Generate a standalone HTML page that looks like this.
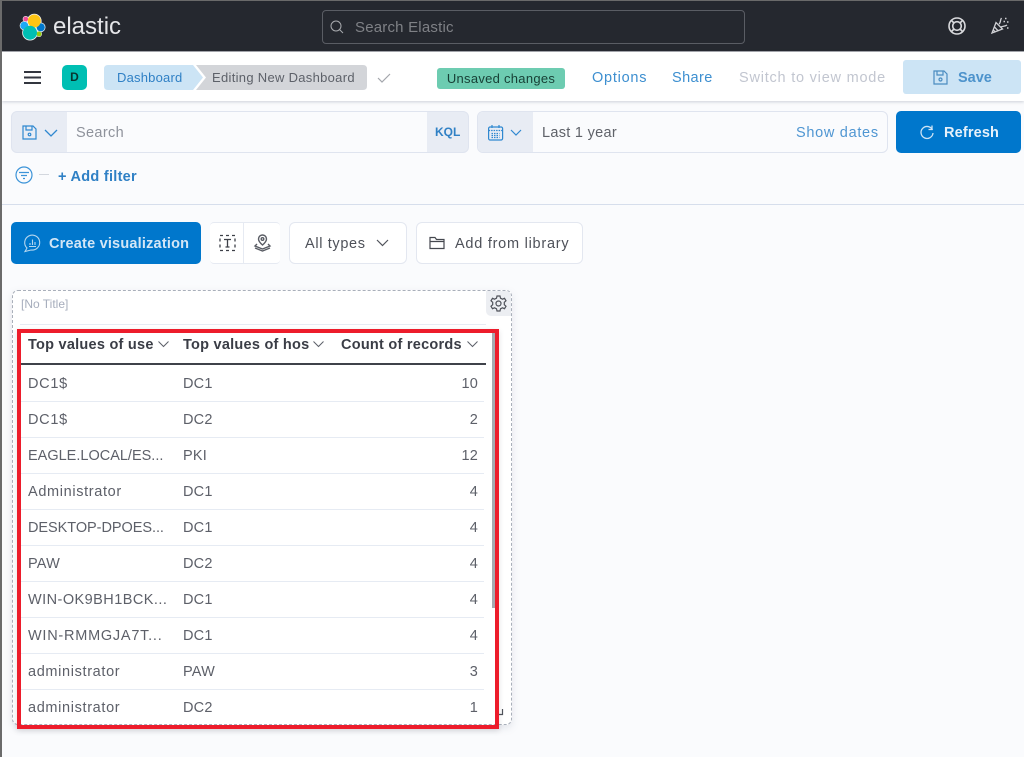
<!DOCTYPE html>
<html><head><meta charset="utf-8"><style>
html,body{margin:0;padding:0}
body{width:1024px;height:757px;position:relative;overflow:hidden;background:#fafbfd;font-family:"Liberation Sans",sans-serif;font-size:14px;color:#343741}
.a{position:absolute;box-sizing:border-box}
.t{position:absolute;white-space:nowrap;line-height:20px}
.cell{position:absolute;white-space:nowrap;font-size:14.5px;line-height:20px;color:#5d6069;letter-spacing:.2px}
.hl{position:absolute;left:21px;width:463px;height:1px;background:#e6ebf3}
svg{position:absolute;overflow:visible;fill:none}
.h{position:absolute;white-space:nowrap;font-weight:bold;font-size:14.5px;line-height:20px;color:#3a3d46;letter-spacing:.25px}
</style></head><body>
<div class="a" style="left:0;top:0;width:1024px;height:52px;background:#25282f;border-top:1px solid #6a6a6a;border-bottom:1px solid #a6a8ad"></div>
<svg style="left:19px;top:13px" width="28" height="28" viewBox="0 0 28 28">
<g fill="#f2f4f4"><circle cx="15.300" cy="8" r="7.300"/><circle cx="11" cy="19.700" r="7.800"/><circle cx="21.700" cy="14.300" r="4.800"/><circle cx="5.300" cy="12.700" r="4.600"/><circle cx="6.700" cy="6" r="3"/><circle cx="20" cy="21" r="3"/></g>
<circle cx="6.700" cy="6" r="2.400" fill="#f04e98"/><circle cx="5.300" cy="12.700" r="4" fill="#1ba9f5"/><circle cx="21.700" cy="14.300" r="4.100" fill="#0077cc"/><circle cx="20" cy="21" r="2.500" fill="#93c90e"/><circle cx="15.300" cy="8" r="6.500" fill="#fec514"/><circle cx="11" cy="19.700" r="7" fill="#00bfb3"/></svg>
<div class="t" style="left:53px;top:13px;font-size:24px;line-height:28px;color:#e4e5e8">elastic</div>
<div class="a" style="left:322px;top:10px;width:423px;height:34px;border:1px solid #5a5d64;border-radius:4px;background:#25282f"></div>
<svg style="left:330px;top:20px" width="14" height="14" stroke="#a9abaf" stroke-width="1"><circle cx="6" cy="6" r="5"/><path d="M9.500 9.500L13 13"/></svg>
<div class="t" style="left:355px;top:17px;font-size:15px;color:#7f8186;letter-spacing:.2px;margin-top:1px">Search Elastic</div>
<svg style="left:948px;top:17px" width="18" height="18" stroke="#d9dadd" stroke-width="1.600"><circle cx="9" cy="9" r="8"/><circle cx="9" cy="9" r="4.300"/><path d="M3.500 3.500L6 6M14.500 3.500L12 6M3.500 14.500L6 12M14.500 14.500L12 12"/></svg>
<svg style="left:991px;top:17px" width="18" height="18" stroke="#cfd0d4" stroke-width="1.300"><path d="M1 16L5 5.500L11.500 12ZM3.500 10L7.500 14.200M2.300 13L4.700 15.200M8 7C10 5.500 9 3 10.500 1M10 10C12 9 14 9.500 16 8"/><path d="M14 1.500h1.500M16 5h1.500M12.500 4.500h1.500M16 11h1.500" stroke-width="1.500"/></svg>

<div class="a" style="left:2px;top:52px;width:1022px;height:49px;background:#fff;box-shadow:0 1px 3px rgba(100,110,130,.3)"></div>
<svg style="left:24px;top:71px" width="18" height="14" stroke="#33363f" stroke-width="2"><path d="M0 1H17M0 6.500H17M0 12H17"/></svg>
<div class="a" style="left:62px;top:65px;width:25px;height:25px;border-radius:5px;background:#00bfb3;color:#07362f;font-size:12px;font-weight:bold;line-height:25px;text-align:center">D</div>
<svg style="left:104px;top:65px" width="264" height="25"><path d="M4 0H89L99 12.500L89 25H4Q0 25 0 21V4Q0 0 4 0Z" fill="#cce4f5"/><path d="M92 0H259Q263 0 263 4V21Q263 25 259 25H92L102 12.500Z" fill="#d3d5d9"/></svg>
<div class="t" style="left:117px;top:68px;font-size:13px;color:#2f80c5;letter-spacing:.2px">Dashboard</div>
<div class="t" style="left:212px;top:68px;font-size:13px;color:#5d6169;letter-spacing:.3px">Editing New Dashboard</div>
<svg style="left:378px;top:73px" width="13" height="10" stroke="#a3a6ac" stroke-width="1.200"><path d="M0 5L4 9L12 1"/></svg>
<div class="a" style="left:437px;top:68px;width:128px;height:21px;background:#6dccb1;border-radius:3px;font-size:13px;line-height:21px;text-align:center;color:#173f35;letter-spacing:.28px">Unsaved changes</div>
<div class="t" style="left:592px;top:68px;font-size:14.500px;color:#3d8fd0;letter-spacing:.75px">Options</div>
<div class="t" style="left:672px;top:68px;font-size:14.500px;color:#3d8fd0;letter-spacing:.4px">Share</div>
<div class="t" style="left:739px;top:68px;font-size:14.500px;color:#c2c6d0;letter-spacing:.78px">Switch to view mode</div>
<div class="a" style="left:903px;top:60px;width:118px;height:34px;background:#cce4f5;border-radius:3px"></div>
<svg style="left:933px;top:70px" width="15" height="15" stroke="#4a8cc0" stroke-width="1.200"><path d="M1 1H11L14 4V14H1ZM4 1V5H10V1"/><circle cx="7.500" cy="9.500" r="1.500"/></svg>
<div class="t" style="left:958px;top:68px;font-size:14.500px;font-weight:bold;color:#4d93cc">Save</div>

<div class="a" style="left:11px;top:111px;width:458px;height:42px;background:#e8ecf4;border:1px solid #dfe4ef;border-radius:6px"></div>
<div class="a" style="left:67px;top:112px;width:360px;height:40px;background:#fafbfd"></div>
<svg style="left:22px;top:125px" width="15" height="15" stroke="#2f88d0" stroke-width="1.200"><path d="M1 1H11L14 4V14H1ZM4 1V5H10V1"/><circle cx="7.500" cy="9.500" r="1.300"/></svg>
<svg style="left:44px;top:129px" width="14" height="8" stroke="#2f88d0" stroke-width="1.300"><path d="M1 1L7 7L13 1"/></svg>
<div class="t" style="left:76px;top:123px;font-size:14.500px;color:#8e929b;letter-spacing:.35px">Search</div>
<div class="t" style="left:435px;top:122px;font-size:12px;font-weight:bold;color:#2f80c5">KQL</div>

<div class="a" style="left:477px;top:111px;width:411px;height:42px;background:#fafbfd;border:1px solid #dfe4ef;border-radius:6px"></div>
<div class="a" style="left:478px;top:112px;width:55px;height:40px;background:#e8ecf4;border-radius:5px 0 0 5px"></div>
<svg style="left:488px;top:125px" width="15" height="16" stroke="#2f88d0" stroke-width="1.200"><rect x=".6" y="2" width="14" height="13" rx="1.500"/><path d="M.6 5.500H14.500M4 0V3M11 0V3M3.500 8.500H11.500M3.500 10.500H11.500M3.500 12.500H11.500" stroke-dasharray="1.500 1"/></svg>
<svg style="left:510px;top:129px" width="12" height="7" stroke="#2f88d0" stroke-width="1.200"><path d="M1 1L6 6L11 1"/></svg>
<div class="t" style="left:542px;top:123px;font-size:14.500px;color:#5f6269;letter-spacing:.3px">Last 1 year</div>
<div class="t" style="left:796px;top:123px;font-size:14.500px;color:#4f96d2;letter-spacing:.7px">Show dates</div>
<div class="a" style="left:896px;top:111px;width:125px;height:42px;background:#0077cc;border-radius:5px"></div>
<svg style="left:920px;top:125px" width="14" height="14" stroke="#cfe4f5" stroke-width="1.300"><path d="M12.500 5A6 6 0 1 0 13 8M12 0.500V4.500H8.500"/></svg>
<div class="t" style="left:944px;top:123px;font-size:14.500px;font-weight:bold;color:#e6f1fa;letter-spacing:.15px">Refresh</div>

<svg style="left:15px;top:166px" width="18" height="18" stroke="#3b93d8" stroke-width="1.200"><circle cx="9" cy="9" r="8"/><path d="M4 6.500H14M6 9.500H12M8 12.500H10"/></svg>
<div class="a" style="left:39px;top:174px;width:10px;height:1px;background:#d3d7de"></div>
<div class="t" style="left:58px;top:167px;font-size:14.500px;font-weight:bold;color:#2f80c5;letter-spacing:.28px">+ Add filter</div>

<div class="a" style="left:2px;top:204px;width:1022px;height:1px;background:#d6deec"></div>

<div class="a" style="left:11px;top:222px;width:190px;height:42px;background:#0077cc;border-radius:5px"></div>
<svg style="left:24px;top:235px" width="17" height="17" stroke="#b7d7ef" stroke-width="1.100"><path d="M3 13A7.500 7.500 0 1 1 7 15L1 16.500L3 13Z"/><path d="M6 10V8M8.500 10V4.500M11 10V7M5 11.500H12"/></svg>
<div class="t" style="left:49px;top:234px;font-size:14.500px;font-weight:bold;color:#d3e6f6;letter-spacing:.2px">Create visualization</div>
<div class="a" style="left:210px;top:222px;width:34px;height:42px;background:#fff;border:1px solid #e6eaf2;border-width:1px 1px 1px 0;border-radius:4px 0 0 4px"></div>
<div class="a" style="left:244px;top:222px;width:36px;height:42px;background:#fff;border-top:1px solid #e6eaf2;border-bottom:1px solid #e6eaf2;border-radius:0 4px 4px 0"></div>
<svg style="left:219px;top:234px" width="17" height="18" stroke="#3d4048" stroke-width="1.300"><rect x="1" y="1.500" width="15" height="15" stroke-dasharray="3 3"/><path d="M5 5.500H12M8.500 5.500V13M6.500 13H10.500"/></svg>
<svg style="left:254px;top:234px" width="17" height="18" stroke="#5a5d65" stroke-width="1.400"><path d="M8.500 11C5 8 4.500 6.500 4.500 5A4 4 0 0 1 12.500 5C12.500 6.500 12 8 8.500 11Z"/><circle cx="8.500" cy="5" r="1.300"/><path d="M3 10L1 12L8.500 15L16 12L14 10M1 14L8.500 17L16 14"/></svg>
<div class="a" style="left:289px;top:222px;width:118px;height:42px;background:#fff;border:1px solid #e3e7f0;border-radius:6px"></div>
<div class="t" style="left:305px;top:234px;font-size:14.500px;color:#4e5159;letter-spacing:.65px">All types</div>
<svg style="left:376px;top:239px" width="13" height="8" stroke="#51545c" stroke-width="1.200"><path d="M1 1L6.500 6.500L12 1"/></svg>
<div class="a" style="left:416px;top:222px;width:167px;height:42px;background:#fff;border:1px solid #e3e7f0;border-radius:6px"></div>
<svg style="left:429px;top:236px" width="16" height="14" stroke="#45484f" stroke-width="1.200"><path d="M1 12.500V1.500H6L7.500 3.500H15V12.500H1ZM1 5.500H15"/></svg>
<div class="t" style="left:455px;top:234px;font-size:14.500px;color:#4e5159;letter-spacing:.75px">Add from library</div>

<div class="a" style="left:12px;top:290px;width:500px;height:435px;background:#fff;border:1px dashed #a9afba;border-radius:6px;box-shadow:0 3px 8px rgba(120,130,150,.18)"></div>
<div class="t" style="left:21px;top:294px;font-size:12px;color:#a6adbc">[No Title]</div>
<div class="a" style="left:486px;top:291px;width:25px;height:25px;background:#eceef2;border-radius:0 5px 0 5px"></div>
<svg style="left:490px;top:295px" width="17" height="17" stroke="#4f525a" stroke-width="1.200"><path d="M7 1H10L10.500 3.200L12.500 4.200L14.500 3.300L16 5.800L14.300 7.300V9.700L16 11.200L14.500 13.700L12.500 12.800L10.500 13.800L10 16H7L6.500 13.800L4.500 12.800L2.500 13.700L1 11.200L2.700 9.700V7.300L1 5.800L2.500 3.300L4.500 4.200L6.500 3.200Z"/><circle cx="8.500" cy="8.500" r="2.500"/></svg>
<div class="a" style="left:20px;top:324px;width:466px;height:1px;background:#e6ebf3"></div>

<div class="h" style="left:28px;top:335px">Top values of use</div>
<svg style="left:158px;top:341px" width="11" height="6" stroke="#5d6069"><path d="M.5 .5L5.500 5.500L10.500 .5"/></svg>
<div class="h" style="left:183px;top:335px">Top values of hos</div>
<svg style="left:313px;top:341px" width="11" height="6" stroke="#5d6069"><path d="M.5 .5L5.500 5.500L10.500 .5"/></svg>
<div class="h" style="left:341px;top:335px">Count of records</div>
<svg style="left:467px;top:341px" width="11" height="6" stroke="#5d6069"><path d="M.5 .5L5.500 5.500L10.500 .5"/></svg>
<div class="a" style="left:20px;top:363px;width:466px;height:2px;background:#3f424a"></div>

<div class="cell" style="left:28px;top:374px;letter-spacing:.7px">DC1$</div><div class="cell" style="left:183px;top:374px">DC1</div><div class="cell" style="right:546px;top:374px">10</div><div class="hl" style="top:401px"></div>
<div class="cell" style="left:28px;top:410px;letter-spacing:.7px">DC1$</div><div class="cell" style="left:183px;top:410px">DC2</div><div class="cell" style="right:546px;top:410px">2</div><div class="hl" style="top:437px"></div>
<div class="cell" style="left:28px;top:446px;letter-spacing:0">EAGLE.LOCAL/ES...</div><div class="cell" style="left:183px;top:446px">PKI</div><div class="cell" style="right:546px;top:446px">12</div><div class="hl" style="top:473px"></div>
<div class="cell" style="left:28px;top:482px;letter-spacing:.65px">Administrator</div><div class="cell" style="left:183px;top:482px">DC1</div><div class="cell" style="right:546px;top:482px">4</div><div class="hl" style="top:509px"></div>
<div class="cell" style="left:28px;top:518px;letter-spacing:-.05px">DESKTOP-DPOES...</div><div class="cell" style="left:183px;top:518px">DC1</div><div class="cell" style="right:546px;top:518px">4</div><div class="hl" style="top:545px"></div>
<div class="cell" style="left:28px;top:554px">PAW</div><div class="cell" style="left:183px;top:554px">DC2</div><div class="cell" style="right:546px;top:554px">4</div><div class="hl" style="top:581px"></div>
<div class="cell" style="left:28px;top:590px;letter-spacing:.45px">WIN-OK9BH1BCK...</div><div class="cell" style="left:183px;top:590px">DC1</div><div class="cell" style="right:546px;top:590px">4</div><div class="hl" style="top:617px"></div>
<div class="cell" style="left:28px;top:626px;letter-spacing:.75px">WIN-RMMGJA7T...</div><div class="cell" style="left:183px;top:626px">DC1</div><div class="cell" style="right:546px;top:626px">4</div><div class="hl" style="top:653px"></div>
<div class="cell" style="left:28px;top:662px;letter-spacing:.65px">administrator</div><div class="cell" style="left:183px;top:662px">PAW</div><div class="cell" style="right:546px;top:662px">3</div><div class="hl" style="top:689px"></div>
<div class="cell" style="left:28px;top:698px;letter-spacing:.65px">administrator</div><div class="cell" style="left:183px;top:698px">DC2</div><div class="cell" style="right:546px;top:698px">1</div>

<div class="a" style="left:492px;top:333px;width:3px;height:275px;background:#a6aab1"></div>
<svg style="left:497px;top:709px" width="7" height="7" stroke="#4f525a" stroke-width="1.200"><path d="M5.500 0V5.500H0"/></svg>
<div class="a" style="left:17px;top:329px;width:482px;height:400px;border:4px solid #ed1c2b;box-shadow:0 2px 5px rgba(100,100,110,.2)"></div>
<div class="a" style="left:0;top:0;width:2px;height:757px;background:#6b6b6b"></div>
</body></html>
